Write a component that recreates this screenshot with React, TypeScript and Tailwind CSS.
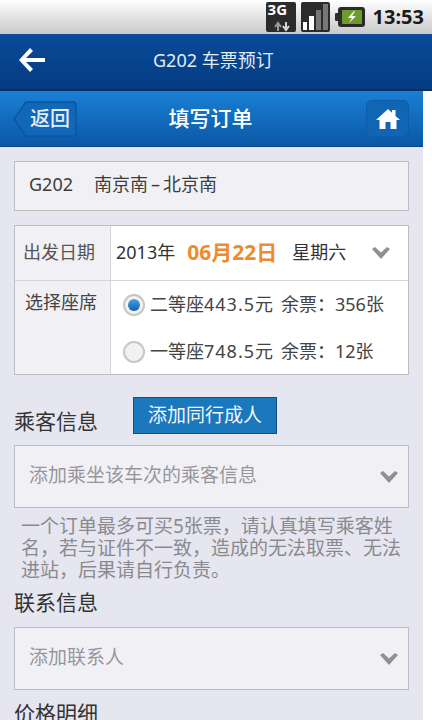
const fontStack = { fontFamily: '"Noto Sans", "Noto Sans CJK SC", sans-serif' };

const COMMA = "\uFF0C";
const COLON = "\uFF1A";
const noteText = `一个订单最多可买5张票${COMMA}请认真填写乘客姓名${COMMA}若与证件不一致${COMMA}造成的无法取票、无法进站${COMMA}后果请自行负责。`;

function Chevron() {
  return (
    <svg width="20" height="14" viewBox="0 0 20 14" className="shrink-0">
      <path d="M1 3 L4 1 L10 6.5 L16 1 L19 3 L10 13 Z" fill="#8f9094" />
    </svg>
  );
}

function StatusBar() {
  return (
    <div className="flex h-[34px] items-center justify-end bg-gradient-to-b from-[#ffffff] to-[#c9c9c9] pr-[8px]">
      <div className="relative mr-[5px] h-[30px] w-[30px] rounded-[2px] bg-[#2b2b2b]">
        <span className="absolute left-[2px] top-[0px] text-[15px] font-bold leading-[15px] text-white">3G</span>
        <svg width="30" height="14" viewBox="0 0 30 14" className="absolute bottom-0 left-0">
          <path d="M12 13V6M9 9l3-4 3 4" stroke="#9a9a9a" strokeWidth="2" fill="none" />
          <path d="M20 4v7M17 8l3 4 3-4" stroke="#d5d5d5" strokeWidth="2" fill="none" />
        </svg>
      </div>
      <div className="mr-[5px] flex h-[30px] w-[29px] items-end gap-[2px] rounded-[2px] bg-[#2b2b2b] px-[2px] pb-[2px]">
        <div className="h-[8px] w-[5px] bg-white" />
        <div className="h-[14px] w-[5px] bg-white" />
        <div className="h-[20px] w-[5px] bg-[#777]" />
        <div className="h-[26px] w-[5px] bg-[#777]" />
      </div>
      <svg width="30" height="22" viewBox="0 0 30 22" className="mr-[8px]">
        <rect x="0" y="7" width="4" height="8" rx="1" fill="#2b2b2b" />
        <rect x="3" y="1" width="27" height="20" rx="3" fill="#2b2b2b" />
        <rect x="7" y="4" width="20" height="14" rx="1" fill="#6f9a2c" />
        <path d="M19 5l-6 7h4l-3 5 7-7h-4l3-5z" fill="#fff" />
      </svg>
      <span className="text-[20px] font-bold leading-none text-[#1a1a1a]">13:53</span>
    </div>
  );
}

function SelectBox({ text }: { text: string }) {
  return (
    <div className="mx-[14px] flex h-[63px] items-center justify-between border border-[#bdbdc0] bg-[#f1f1f5] pl-[14px] pr-[9px]">
      <span className="pb-[3px] text-[19px] leading-none text-[#97979b]">{text}</span>
      <Chevron />
    </div>
  );
}

function Radio({ checked }: { checked: boolean }) {
  return (
    <div className="flex h-[22px] w-[22px] shrink-0 items-center justify-center rounded-full border-2 border-[#c8c6c2] bg-[#f2f2f2]">
      {checked && <div className="h-[12px] w-[12px] rounded-full bg-gradient-to-b from-[#4aa0e6] to-[#0f62ad]" />}
    </div>
  );
}

export default function App() {
  return (
    <div className="h-[720px] w-[432px] overflow-hidden bg-white" style={fontStack}>
      <StatusBar />
      <div className="flex h-[57px] items-center border-b-2 border-[#06305f] bg-gradient-to-b from-[#0a4a98] to-[#043c82] pb-[3px]">
        <svg width="30" height="26" viewBox="0 0 30 26" className="ml-[16px]">
          <path d="M14 1 L3 13 L14 25 L17 22 L10 15 H29 V11 H10 L17 4 Z" fill="#fff" />
        </svg>
        <span className="ml-[107px] text-[18px] text-[#e4ebf5]">G202 车票预订</span>
      </div>
      <div className="h-[629px] w-[423px] bg-[#e6e6f0]">
        <div className="flex h-[56px] items-center justify-between border-b border-[#0a4488] bg-gradient-to-b from-[#1a80d4] to-[#0a58a6] pl-[13px] pr-[14px]">
          <div className="relative flex h-[36px] w-[64px] items-center justify-end pr-[7px] text-[20px] font-medium leading-none text-[#e4edf7]">
            <svg width="64" height="36" viewBox="0 0 64 36" className="absolute left-0 top-0">
              <path d="M13 1 H60 Q63 1 63 4 V32 Q63 35 60 35 H13 L1 18 Z" fill="#1167b8" stroke="#0d56a0" strokeWidth="1.5" />
            </svg>
            <span className="relative">返回</span>
          </div>
          <span className="mr-[22px] text-[21px] font-medium text-white">填写订单</span>
          <div className="flex h-[37px] w-[43px] items-center justify-center rounded-[6px] border border-[#0e5ba8] bg-[#1165b5]">
            <svg width="24" height="22" viewBox="0 0 24 22">
              <path d="M12 1 L16 4.7 V2 H19.5 V8 L24 12 H20.5 V21 H14.5 V14 H9.5 V21 H3.5 V12 H0 Z" fill="#fff" />
            </svg>
          </div>
        </div>

        <div className="mx-[14px] mt-[14px] flex h-[50px] items-center border border-[#bdbdc0] bg-[#f1f1f5] pb-[3px] pl-[14px] text-[18px] text-[#3c3c3c]">
          <span className="mr-[21px]">G202</span>
          <span>南京南<span className="mx-[3px]">–</span>北京南</span>
        </div>

        <div className="mx-[14px] mt-[14px] grid h-[150px] grid-cols-[96px_1fr] grid-rows-[55px_1fr] border border-[#bdbdc0] bg-white">
          <div className="flex items-center border-b border-r border-[#d6d6da] bg-[#f1f1f5] pb-[2px] pl-[8px] text-[18px] text-[#555]">
            出发日期
          </div>
          <div className="flex items-center border-b border-[#d6d6da] pl-[5px] pr-[17px] text-[18px] text-[#333]">
            <span className="pb-[2px]">2013年</span>
            <span className="ml-[12px] pb-[2px] text-[21px] font-bold leading-none text-[#ee8b2e]">06月22日</span>
            <span className="ml-[15px] pb-[2px]">星期六</span>
            <div className="ml-auto"><Chevron /></div>
          </div>
          <div className="border-r border-[#d6d6da] bg-[#f1f1f5] pl-[10px] pt-[8px] text-[18px] text-[#444]">选择座席</div>
          <div className="flex flex-col pl-[12px] pt-[12px] text-[18px] text-[#444]">
            <div className="flex h-[24px] items-center gap-[5px]">
              <Radio checked />
              <span className="whitespace-nowrap pb-[2px]">二等座<span className="tracking-[1px]">443.5</span>元<span className="ml-[8px]">{`余票${COLON}356张`}</span></span>
            </div>
            <div className="mt-[23px] flex h-[24px] items-center gap-[5px]">
              <Radio checked={false} />
              <span className="whitespace-nowrap pb-[2px]">一等座<span className="tracking-[1px]">748.5</span>元<span className="ml-[8px]">{`余票${COLON}12张`}</span></span>
            </div>
          </div>
        </div>

        <div className="mx-[14px] mt-[22px] flex h-[37px] items-end">
          <span className="-mb-[1px] text-[21px] leading-[28px] text-[#333]">乘客信息</span>
          <button className="ml-[35px] h-[37px] w-[144px] border border-[#0e4f8e] bg-[#1b78bd] text-[19px] leading-none text-[#f1f6fb]">
            添加同行成人
          </button>
        </div>
        <div className="mt-[11px]"><SelectBox text="添加乘坐该车次的乘客信息" /></div>
        <p className="mx-[21px] mt-[7px] text-[19px] leading-[22px] text-[#8a8a8e]">{noteText}</p>
        <div className="mx-[14px] mt-[7px] text-[21px] leading-[28px] text-[#333]">联系信息</div>
        <div className="mt-[11px]"><SelectBox text="添加联系人" /></div>
        <div className="mx-[14px] mt-[9px] text-[21px] leading-[28px] text-[#333]">价格明细</div>
      </div>
    </div>
  );
}
